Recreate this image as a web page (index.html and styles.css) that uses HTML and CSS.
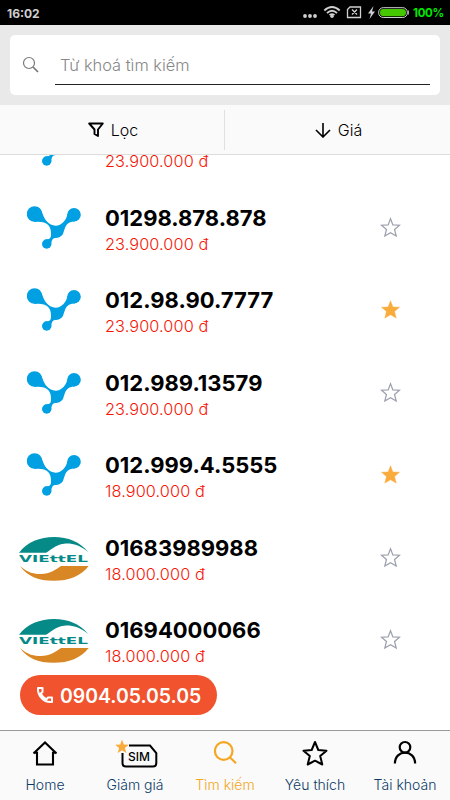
FILE: index.html
```html
<!DOCTYPE html>
<html lang="vi">
<head>
    <meta charset="UTF-8">
    <meta name="viewport" content="width=device-width, initial-scale=1.0">
    <title>Tìm kiếm sim</title>
    <link rel="stylesheet" href="styles.css">
</head>
<body>

    <!-- Shared icons -->
    <svg class="sprite" width="0" height="0">
        <symbol id="vina" viewBox="0 0 54 44">
            <circle cx="7.500" cy="8" r="7.700"/>
            <circle cx="47" cy="8.800" r="6.800"/>
            <circle cx="19.700" cy="38" r="4.700"/>
            <path d="M10 0.700C15.500 3 15.500 10.500 19.500 15C24.500 21 32 21 36.500 16C39 13 40 11 40.400 8L48 15.500C42 15.500 39.500 18 38 22C36.500 25 36.500 29 34 30C31 33 27 31 25.500 33.500C24.500 35 24.300 37 24.200 39L18 33.700C22.500 33.500 24 32 24 29C24 26 24 23 22 20C18.500 15.500 14 16 7 15.700Z"/>
        </symbol>
        <symbol id="viettel" viewBox="0 0 70 44">
            <path fill="#068a87" d="M0 15.700C8 5 21 0 35 0C49 0 61 5 69.300 15C60 7.500 52 6 45 6.800C36 8 33 12.500 27 15.700Z"/>
            <path fill="#d98724" d="M1 29C9 36 15 37 22 37C31 37 36 33 42 29H69.700C62 39 50 43.800 34.500 43.800C19 43.800 8 39 1 29Z"/>
            <text class="viettel-text" x="0" y="25" textLength="69" lengthAdjust="spacingAndGlyphs">VIEttEL</text>
        </symbol>
        <symbol id="star" viewBox="0 0 24 24">
            <path d="M12 2L14.700 9.100L22.300 9.400L16.600 14.200L18.500 21.800L12 18L5.500 21.800L7.400 14.200L1.700 9.400L9.300 9.100Z"/>
        </symbol>
    </svg>

    <!-- Status bar -->
    <div class="status-bar">
        <span class="time">16:02</span>
        <svg class="status-icons" width="112" height="25" viewBox="0 0 112 25">
            <g fill="#d0d0d0">
                <circle cx="6" cy="16" r="1.900"/>
                <circle cx="11" cy="16" r="1.900"/>
                <circle cx="16" cy="16" r="1.900"/>
                <circle cx="33" cy="16.200" r="1.700"/>
                <path d="M74.500 6L69 13.500H72L70.500 19L76 11.500H73Z"/>
            </g>
            <g fill="none" stroke="#d0d0d0">
                <path stroke-width="1.700" d="M25.300 10.500Q33 3.500 40.700 10.500M28 13Q33 8.500 38 13M30.500 15.200Q33 13 35.500 15.200"/>
                <path stroke-width="1.300" d="M51 7H61.500V17.500H48.500V9.500ZM53 9.500L58 14.500M58 9.500L53 14.500"/>
                <rect x="79.700" y="7.700" width="28.600" height="9.800" rx="4.500"/>
            </g>
            <path stroke="#d0d0d0" d="M109.300 10.500V14.500"/>
            <rect x="81" y="9" width="26" height="7.200" rx="3.400" fill="#46c800"/>
        </svg>
        <span class="battery">100%</span>
    </div>

    <!-- Search -->
    <div class="search">
        <div class="search-box">
            <svg width="18" height="18" viewBox="0 0 18 18" fill="none" stroke="#77797c">
                <circle cx="7" cy="7" r="5.500" stroke-width="1.200"/>
                <path stroke-width="1.700" d="M11 11L16 16"/>
            </svg>
            <div class="search-input">Từ khoá tìm kiếm</div>
        </div>
    </div>

    <!-- Filter -->
    <div class="filter">
        <div class="filter-item">
            <svg width="16" height="16" viewBox="0 0 16 16" fill="none" stroke="#000" stroke-width="1.900" stroke-linejoin="round">
                <path d="M1.200 1.500H14.800L10 7.500V14L6.500 12V7.500Z"/>
            </svg>
            <span>Lọc</span>
        </div>
        <div class="filter-item">
            <svg width="16" height="16" viewBox="0 0 16 16" fill="none" stroke="#000" stroke-width="1.600">
                <path d="M8 1V15M1 8L8 15L15 8"/>
            </svg>
            <span>Giá</span>
        </div>
    </div>

    <!-- Sim list -->
    <div class="list">
        <div class="sim">
            <svg class="vina"><use href="#vina"/></svg>
            <div class="info"><div class="price">23.900.000 đ</div></div>
        </div>
        <div class="sim">
            <svg class="vina"><use href="#vina"/></svg>
            <div class="info"><div class="number">01298.878.878</div><div class="price">23.900.000 đ</div></div>
            <svg class="star"><use href="#star"/></svg>
        </div>
        <div class="sim">
            <svg class="vina"><use href="#vina"/></svg>
            <div class="info"><div class="number">012.98.90.7777</div><div class="price">23.900.000 đ</div></div>
            <svg class="star liked"><use href="#star"/></svg>
        </div>
        <div class="sim">
            <svg class="vina"><use href="#vina"/></svg>
            <div class="info"><div class="number">012.989.13579</div><div class="price">23.900.000 đ</div></div>
            <svg class="star"><use href="#star"/></svg>
        </div>
        <div class="sim">
            <svg class="vina"><use href="#vina"/></svg>
            <div class="info"><div class="number">012.999.4.5555</div><div class="price">18.900.000 đ</div></div>
            <svg class="star liked"><use href="#star"/></svg>
        </div>
        <div class="sim">
            <svg class="viettel"><use href="#viettel"/></svg>
            <div class="info"><div class="number">01683989988</div><div class="price">18.000.000 đ</div></div>
            <svg class="star"><use href="#star"/></svg>
        </div>
        <div class="sim">
            <svg class="viettel"><use href="#viettel"/></svg>
            <div class="info"><div class="number">01694000066</div><div class="price">18.000.000 đ</div></div>
            <svg class="star"><use href="#star"/></svg>
        </div>
    </div>

    <!-- Hotline -->
    <div class="hotline">
        <svg width="18" height="18" viewBox="0 0 18 18" fill="none" stroke="#fff" stroke-width="2" stroke-linejoin="round">
            <path d="M2 2H6.500V6L4.700 7.500Q6.500 11.500 10.500 13.300L12 11.500H16V16Q10 16.500 6 12.500Q1.500 8 2 2Z"/>
        </svg>
        <span>0904.05.05.05</span>
    </div>

    <!-- Tab bar -->
    <div class="tabs">
        <div class="tab">
            <svg width="40" height="30" viewBox="0 0 40 30" fill="none" stroke="#000" stroke-width="2.100">
                <path d="M8.500 15.500L20 4.500L31.500 15.500M8.500 14.800H12V26.500H28V14.800H31.500"/>
            </svg>
            <span>Home</span>
        </div>
        <div class="tab">
            <svg width="50" height="30" viewBox="0 0 50 30">
                <path fill="none" stroke="#000" stroke-width="2" d="M12.500 15V25Q12.500 28.500 16 28.500H43Q46.300 28.500 46.300 25V15L40 7.500H19"/>
                <path fill="#f9ab3b" d="M12 1.500L13.800 6.500L18.800 6.700L14.900 10L16.300 15L12 12.200L7.700 15L9.100 10L5.200 6.700L10.200 6.500Z"/>
                <text class="sim-text" x="18" y="23" textLength="22">SIM</text>
            </svg>
            <span>Giảm giá</span>
        </div>
        <div class="tab active">
            <svg width="40" height="30" viewBox="0 0 40 30" fill="none" stroke="#f5a623" stroke-width="2.200">
                <circle cx="18.700" cy="13" r="8.800"/>
                <path d="M24.800 19.200L31 25.200"/>
            </svg>
            <span>Tìm kiếm</span>
        </div>
        <div class="tab">
            <svg width="40" height="30" viewBox="0 0 40 30" fill="none" stroke="#000" stroke-width="2" stroke-linejoin="round">
                <path d="M20 4L23.300 12L31.500 12.700L25.200 18.100L27.300 26.500L20 22.700L12.700 26.500L14.800 18.100L8.500 12.700L16.700 12Z"/>
            </svg>
            <span>Yêu thích</span>
        </div>
        <div class="tab">
            <svg width="40" height="30" viewBox="0 0 40 30" fill="none" stroke="#000" stroke-width="2.200">
                <circle cx="20" cy="9.300" r="5.300"/>
                <path d="M9.900 25.500C9.900 11 30.100 11 30.100 25.500"/>
            </svg>
            <span>Tài khoản</span>
        </div>
    </div>

</body>
</html>
```
FILE: styles.css
```css
* {
    box-sizing: border-box;
}

body {
    font-family: Inter, 'Noto Sans', sans-serif;
    background-color: #fff;
    margin: 0;
    height: 800px;
    display: flex;
    flex-direction: column;
    overflow: hidden;
    position: relative;
    color: #000;
}

svg {
    display: block;
    flex-shrink: 0;
}

.sprite {
    position: absolute;
}

/* Status bar */
.status-bar {
    height: 25px;
    flex-shrink: 0;
    background-color: #000;
    display: flex;
    align-items: center;
    padding: 0 7px;
    font-size: 12px;
    font-weight: bold;
}

.time {
    color: #d0d0d0;
    padding-top: 1px;
}

.status-icons {
    margin-left: auto;
}

.battery {
    width: 32px;
    padding-left: 2px;
    color: #00e800;
    font-size: 11.5px;
    letter-spacing: -0.3px;
    white-space: nowrap;
}

/* Search */
.search {
    height: 80px;
    flex-shrink: 0;
    padding: 10px;
    background-color: #e9e9e9;
}

.search-box {
    height: 60px;
    background-color: #fff;
    border-radius: 5px;
    display: flex;
    align-items: center;
    padding: 0 10px 0 12px;
}

.search-input {
    flex: 1;
    height: 40px;
    margin-left: 15px;
    padding-left: 5px;
    border-bottom: 1px solid #222;
    line-height: 40px;
    font-size: 16.4px;
    font-weight: 300;
    color: #888;
}

/* Filter */
.filter {
    height: 50px;
    flex-shrink: 0;
    display: flex;
    align-items: center;
    background-color: #fafafa;
    border-bottom: 1px solid #ddd;
}

.filter-item {
    width: 225px;
    height: 40px;
    display: flex;
    align-items: center;
    justify-content: center;
    gap: 7px;
    padding-left: 2px;
    font-size: 16px;
    font-weight: 300;
}

.filter-item:first-child {
    border-right: 1px solid #e0e0e0;
}

/* List */
.list {
    flex: 1;
    min-height: 0;
    overflow: hidden;
}

.sim {
    height: 82.5px;
    display: flex;
    align-items: center;
    padding: 0 49.5px 0 19px;
}

.sim:first-child {
    margin-top: -51.2px;
}

.vina {
    width: 54px;
    height: 44px;
    margin: 0 8px;
    fill: #00a0e3;
}

.viettel {
    width: 70px;
    height: 44px;
    margin-top: 2px;
}

.viettel-text {
    font-family: 'DejaVu Sans', sans-serif;
    font-size: 8.4px;
    font-weight: bold;
    fill: #068a87;
}

.info {
    flex: 1;
    margin-left: 16px;
    padding-top: 6px;
}

.sim:first-child .info {
    padding-top: 32px;
}

.number {
    font-size: 22px;
    font-weight: 700;
    line-height: 26px;
}

.price {
    font-size: 16.3px;
    font-weight: 300;
    line-height: 26px;
    letter-spacing: 0.1px;
    color: #f71505;
}

.star {
    width: 21px;
    height: 21px;
    margin-bottom: 1px;
    fill: none;
    stroke: #9ba0ab;
    stroke-width: 1.4;
}

.star.liked {
    fill: #f9ab3b;
    stroke: #f9ab3b;
    stroke-width: 0.5;
}

/* Hotline button over the list */
.hotline {
    position: absolute;
    left: 20px;
    bottom: 85px;
    width: 197px;
    height: 40px;
    border-radius: 20px;
    background-color: #f0532d;
    color: #fff;
    display: flex;
    align-items: center;
    padding-left: 16px;
    gap: 6px;
    font-size: 19.4px;
    font-weight: 600;
}

.hotline span {
    padding-top: 1px;
}

/* Tab bar */
.tabs {
    height: 70px;
    flex-shrink: 0;
    display: flex;
    background-color: #fafafa;
    border-top: 1px solid #999;
}

.tab {
    flex: 1;
    display: flex;
    flex-direction: column;
    align-items: center;
    padding-top: 7px;
    font-size: 14px;
    font-weight: 300;
    color: #0c3a66;
    white-space: nowrap;
}

.tab span {
    margin-top: 8px;
    line-height: 17px;
}

.tab.active {
    color: #f5a623;
}

.sim-text {
    font-size: 12px;
    font-weight: 500;
}
```
